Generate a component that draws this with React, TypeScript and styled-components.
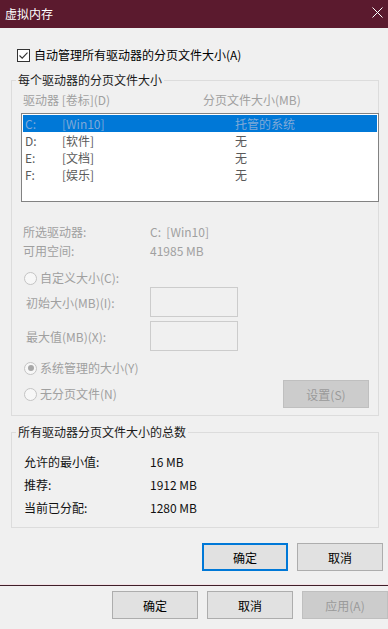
import React, { FC, ReactElement } from 'react';
import styled, { createGlobalStyle } from 'styled-components';

const GlobalStyle = createGlobalStyle`
  html, body {
    margin: 0;
    padding: 0;
    background: #f0f0f0;
  }
  body {
    font-family: "Noto Sans CJK SC", "Noto Sans", sans-serif;
    font-size: 12px;
    color: #000;
  }
`;

type Drive = { letter: string; label: string; size: string; selected?: boolean };

const drives: Drive[] = [
  { letter: 'C:', label: '[Win10]', size: '托管的系统', selected: true },
  { letter: 'D:', label: '[软件]', size: '无' },
  { letter: 'E:', label: '[文档]', size: '无' },
  { letter: 'F:', label: '[娱乐]', size: '无' },
];

const totals = [
  { label: '允许的最小值:', value: '16 MB' },
  { label: '推荐:', value: '1912 MB' },
  { label: '当前已分配:', value: '1280 MB' },
];

const CheckIcon: FC = (): ReactElement => (
  <svg width="13" height="13" viewBox="0 0 13 13">
    <rect x="0.5" y="0.5" width="12" height="12" fill="#fff" stroke="#333" />
    <path d="M2.5 6.5 L5.2 9.2 L10.5 3.6" fill="none" stroke="#333" strokeWidth="1.1" />
  </svg>
);

const Radio: FC<{ checked?: boolean; label: string }> = ({ checked, label }): ReactElement => (
  <RadioRow>
    <RadioCircle>{checked && <RadioDot />}</RadioCircle>
    <span>{label}</span>
  </RadioRow>
);

const App: FC = (): ReactElement => (
  <Screen>
    <GlobalStyle />
    <Dialog>
      <TitleBar>
        <Title>虚拟内存</Title>
        <CloseButton>
          <svg width="11" height="11" viewBox="0 0 11 11">
            <path d="M0.5 0.5 L10.5 10.5 M10.5 0.5 L0.5 10.5" stroke="#fff" strokeWidth="1" />
          </svg>
        </CloseButton>
      </TitleBar>

      <CheckRow>
        <CheckIcon />
        <span>自动管理所有驱动器的分页文件大小(A)</span>
      </CheckRow>

      <Group>
        <Legend>每个驱动器的分页文件大小</Legend>
        <HeaderRow>
          <HeaderCell $width={180}>驱动器 [卷标](D)</HeaderCell>
          <HeaderCell>分页文件大小(MB)</HeaderCell>
        </HeaderRow>
        <ListBox>
          {drives.map((d) => (
            <ListRow key={d.letter} $selected={d.selected}>
              <DriveCell>{d.letter}</DriveCell>
              <LabelCell>{d.label}</LabelCell>
              <span>{d.size}</span>
            </ListRow>
          ))}
        </ListBox>

        <InfoRow $top={22}>
          <InfoLabel>所选驱动器:</InfoLabel>
          <span>C:&nbsp;&nbsp;[Win10]</span>
        </InfoRow>
        <InfoRow $top={3}>
          <InfoLabel>可用空间:</InfoLabel>
          <span>41985 MB</span>
        </InfoRow>

        <RadioWrap $top={11}>
          <Radio label="自定义大小(C):" />
        </RadioWrap>
        <FieldRow $top={1}>
          <FieldLabel>初始大小(MB)(I):</FieldLabel>
          <TextBox />
        </FieldRow>
        <FieldRow $top={4}>
          <FieldLabel>最大值(MB)(X):</FieldLabel>
          <TextBox />
        </FieldRow>
        <RadioWrap $top={9}>
          <Radio checked label="系统管理的大小(Y)" />
        </RadioWrap>
        <LastRow>
          <Radio label="无分页文件(N)" />
          <Button $disabled $width={86}>设置(S)</Button>
        </LastRow>
      </Group>

      <TotalsGroup>
        <Legend>所有驱动器分页文件大小的总数</Legend>
        {totals.map((t, i) => (
          <TotalRow key={t.label} $top={i === 0 ? 14 : 7}>
            <TotalLabel>{t.label}</TotalLabel>
            <span>{t.value}</span>
          </TotalRow>
        ))}
      </TotalsGroup>

      <DialogButtons>
        <Button $default>确定</Button>
        <Button>取消</Button>
      </DialogButtons>
    </Dialog>

    <ParentButtons>
      <Button>确定</Button>
      <Button>取消</Button>
      <Button $disabled>应用(A)</Button>
    </ParentButtons>
  </Screen>
);

const Screen = styled.div`
  width: 388px;
  height: 629px;
  overflow: hidden;
  background: #f0f0f0;
`;

const Dialog = styled.div`
  display: flex;
  flex-direction: column;
  border-bottom: 1px solid #3e1f29;
  box-shadow: 0 -1px 0 #f3e3e7 inset;
  padding-bottom: 14px;
`;

const TitleBar = styled.div`
  height: 28px;
  background: #5b1a2e;
  display: flex;
  align-items: center;
  justify-content: space-between;
`;

const Title = styled.div`
  color: #fff;
  font-size: 12px;
  padding-left: 5px;
  line-height: 16px;
  margin-top: -1px;
`;

const CloseButton = styled.div`
  width: 21px;
  height: 28px;
  display: flex;
  align-items: center;
  justify-content: flex-start;
  padding-left: 5px;
  box-sizing: border-box;
  margin-top: -4px;
`;

const CheckRow = styled.div`
  display: flex;
  align-items: center;
  gap: 4px;
  height: 16px;
  line-height: 16px;
  margin: 19px 0 0 17px;
`;

const Group = styled.fieldset`
  margin: 9px 9px 0 11px;
  padding: 0 0 7px 0;
  border: 1px solid #dcdcdc;
  min-width: 0;
`;

const TotalsGroup = styled(Group)`
  margin-top: 8px;
  padding-bottom: 11px;
`;

const Legend = styled.legend`
  margin-left: 4px;
  padding: 0 2px;
  line-height: 16px;
  height: 16px;
  color: #1a1a1a;
`;

const HeaderRow = styled.div`
  display: flex;
  height: 16px;
  line-height: 16px;
  margin: 4px 0 0 11px;
  color: #a0a0a0;
`;

const HeaderCell = styled.div<{ $width?: number }>`
  width: ${(p) => (p.$width ? `${p.$width}px` : 'auto')};
`;

const ListBox = styled.div`
  margin: 5px -1px 0 9px;
  height: 89px;
  box-sizing: border-box;
  border: 1px solid #828282;
  background: #fff;
  padding: 1px;
`;

const ListRow = styled.div<{ $selected?: boolean }>`
  display: flex;
  height: 17px;
  line-height: 17px;
  padding-left: 2px;
  background: ${(p) => (p.$selected ? '#0078d7' : 'transparent')};
  color: ${(p) => (p.$selected ? '#7fa9d8' : '#5a5a5a')};
`;

const DriveCell = styled.span`
  width: 37px;
`;

const LabelCell = styled.span`
  width: 173px;
`;

const InfoRow = styled.div<{ $top: number }>`
  display: flex;
  height: 16px;
  line-height: 16px;
  margin: ${(p) => p.$top}px 0 0 11px;
  color: #a0a0a0;
`;

const InfoLabel = styled.span`
  width: 127px;
`;

const RadioWrap = styled.div<{ $top: number }>`
  margin: ${(p) => p.$top}px 0 0 12px;
`;

const RadioRow = styled.div`
  display: flex;
  align-items: center;
  gap: 3px;
  height: 16px;
  line-height: 16px;
  color: #a0a0a0;
`;

const RadioCircle = styled.span`
  width: 13px;
  height: 13px;
  box-sizing: border-box;
  border: 1px solid #c4c4c4;
  border-radius: 50%;
  background: #f7f7f7;
  display: flex;
  align-items: center;
  justify-content: center;
`;

const RadioDot = styled.span`
  width: 6px;
  height: 6px;
  border-radius: 50%;
  background: #a8a8a8;
`;

const FieldRow = styled.div<{ $top: number }>`
  display: flex;
  align-items: center;
  margin: ${(p) => p.$top}px 0 0 14px;
  color: #a0a0a0;
`;

const FieldLabel = styled.span`
  width: 124px;
  line-height: 16px;
  padding-top: 1px;
`;

const TextBox = styled.div`
  width: 88px;
  height: 30px;
  box-sizing: border-box;
  border: 1px solid #cccccc;
  background: #f0f0f0;
`;

const LastRow = styled.div`
  display: flex;
  align-items: center;
  justify-content: space-between;
  height: 28px;
  margin: 4px 9px 0 12px;
`;

const TotalRow = styled.div<{ $top: number }>`
  display: flex;
  height: 16px;
  line-height: 16px;
  margin: ${(p) => p.$top}px 0 0 12px;
  color: #111;
`;

const TotalLabel = styled.span`
  width: 126px;
`;

const Button = styled.div<{ $default?: boolean; $disabled?: boolean; $width?: number }>`
  width: ${(p) => p.$width ?? 86}px;
  height: 28px;
  box-sizing: border-box;
  display: flex;
  align-items: center;
  justify-content: center;
  background: ${(p) => (p.$disabled ? '#cccccc' : '#e1e1e1')};
  border: ${(p) => (p.$default ? '2px solid #0078d7' : p.$disabled ? '1px solid #bfbfbf' : '1px solid #adadad')};
  color: ${(p) => (p.$disabled ? '#9a9a9a' : '#000')};
`;

const DialogButtons = styled.div`
  display: flex;
  justify-content: flex-end;
  gap: 9px;
  margin: 15px 5px 0 0;
`;

const ParentButtons = styled.div`
  display: flex;
  justify-content: flex-end;
  gap: 9px;
  margin: 5px 0 0 0;
`;

export default App;
